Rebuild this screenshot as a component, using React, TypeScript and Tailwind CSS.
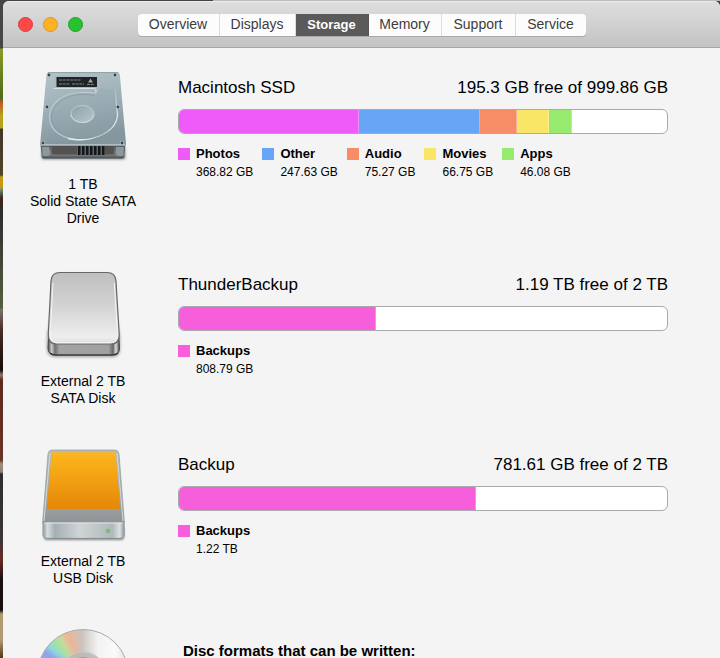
import { useState } from 'react';
import type { ReactNode } from 'react';
import clsx from 'clsx';

interface Segment {
  label: string;
  value: string;
  size: number;
  color: string;
}

interface Volume {
  name: string;
  free: string;
  capacity: number;
  caption: string[];
  icon: ReactNode;
  segments: Segment[];
}

const tabs = [
  { label: 'Overview', width: 'w-[82px]' },
  { label: 'Displays', width: 'w-[76px]' },
  { label: 'Storage', width: 'w-[73px]' },
  { label: 'Memory', width: 'w-[73px]' },
  { label: 'Support', width: 'w-[74px]' },
  { label: 'Service', width: 'w-[70px]' },
];

const lights = [
  { label: 'Close', color: 'bg-[#fc4848] border-[#e03c3c]' },
  { label: 'Minimize', color: 'bg-[#fdb226] border-[#de991c]' },
  { label: 'Zoom', color: 'bg-[#28c231] border-[#1ca526]' },
];

function InternalDriveIcon() {
  const screws = [
    [21, 7],
    [87, 7],
    [19, 39],
    [90, 39],
    [15, 75],
    [94, 75],
  ];
  return (
    <svg viewBox="0 0 110 108" className="h-[108px] w-[110px]" aria-hidden="true">
      <defs>
        <linearGradient id="hd-lid" x1="0" y1="0" x2="0.25" y2="1">
          <stop offset="0" stopColor="#b3c4ca" />
          <stop offset="0.5" stopColor="#9fb1b8" />
          <stop offset="1" stopColor="#84969e" />
        </linearGradient>
        <linearGradient id="hd-front" x1="0" y1="0" x2="0" y2="1">
          <stop offset="0" stopColor="#50575c" />
          <stop offset="0.75" stopColor="#747c80" />
          <stop offset="1" stopColor="#454c50" />
        </linearGradient>
        <linearGradient id="hd-hub" x1="0" y1="0" x2="1" y2="1">
          <stop offset="0" stopColor="#8d9fa6" />
          <stop offset="1" stopColor="#b9c8cd" />
        </linearGradient>
        <linearGradient id="hd-rim" x1="0" y1="0" x2="0" y2="1">
          <stop offset="0" stopColor="#c5d3d8" stopOpacity="0.2" />
          <stop offset="0.5" stopColor="#d3dfe3" />
          <stop offset="1" stopColor="#e1eaed" />
        </linearGradient>
        <filter id="hd-shadow" x="-10%" y="-10%" width="120%" height="130%">
          <feGaussianBlur stdDeviation="1.6" />
        </filter>
      </defs>
      <path d="M14 80H97V91H14Z" fill="#000" opacity="0.55" filter="url(#hd-shadow)" />
      <path d="M12.500 76H97.500L96.500 88Q96.300 90.500 94 90.500H16Q13.700 90.500 13.500 88Z" fill="url(#hd-front)" />
      <path d="M24 78H86V86.500H24Z" fill="#55514f" />
      <path d="M14 79H21Q23 84 21 88H15Z M88 79H96L95 88H89Q87 84 88 79Z" fill="#8d979c" />
      <path d="M49 78H77V87H49Z" fill="#5e6467" />
      {[50, 54, 58, 62, 66, 70, 74].map((x) => (
        <rect key={x} x={x} y="78" width="2.500" height="9" fill="#15181a" />
      ))}
      <path
        d="M21 4H89Q91.500 4 91.800 6.500L98 75.500Q98 77.500 96 77.500H14Q12 77.500 12.200 75.500L18.500 6.500Q18.800 4 21 4Z"
        fill="url(#hd-lid)"
      />
      <path d="M20 4.600H90" stroke="#8fa1a8" strokeWidth="1" />
      <path d="M13 76.800H97" stroke="#bccbd0" strokeWidth="1.200" />
      <path d="M26 7.500H71V20.500H26Z" fill="#a9bbc1" />
      <path d="M25.500 20.500H66Q68.500 20.500 68 25" stroke="#d4e0e3" strokeWidth="1.200" fill="none" />
      {/* Platter recess */}
      <path
        d="M68 25Q60 24 52 24.500C34 25.500 21.500 36 21.500 49C21.500 63 35 72 55 72C76 72 90 61 89.500 46L87 22L72 20Z"
        fill="#8fa3ab"
        fillOpacity="0.25"
      />
      <path d="M68 25Q60 24 52 24.500C34 25.500 21.500 36 21.500 49C21.500 63 35 72 55 72" stroke="#bccbd1" strokeWidth="1.200" fill="none" />
      <path d="M40 70.500C60 75 88 66 89.500 47L87 20" stroke="url(#hd-rim)" strokeWidth="1.400" fill="none" />
      <path d="M66 27.500Q59 26 52 26.500C36 28 23.500 37 23.500 49C23.500 60 35 69.500 54 70" stroke="#899da5" strokeWidth="0.800" fill="none" />
      <path d="M58 70C76 69 87 60 87.500 47" stroke="#82969e" strokeWidth="0.800" fill="none" />
      <ellipse cx="54.500" cy="46" rx="11.500" ry="8.500" fill="url(#hd-hub)" stroke="#c6d3d8" strokeWidth="0.800" />
      <path d="M43 47Q45 54.500 54.500 54.500T66 47" stroke="#cfdbdf" strokeWidth="0.900" fill="none" />
      <rect x="28.500" y="9" width="40.500" height="10" fill="#202426" />
      <path d="M31 12H53M31 16H42M44 16H56M59 16.500H66" stroke="#7e878b" strokeWidth="1" strokeDasharray="3 0.700" />
      <path d="M62.500 10.500L65 14.500H60Z" fill="#9da4a7" />
      {screws.map(([x, y]) => (
        <g key={`${x}-${y}`}>
          <circle cx={x} cy={y} r="2.200" fill="#b7c6cc" />
          <circle cx={x} cy={y} r="1.400" fill="#33424a" />
        </g>
      ))}
    </svg>
  );
}

function SataDiskIcon() {
  return (
    <svg viewBox="0 0 110 108" className="h-[108px] w-[110px]" aria-hidden="true">
      <defs>
        <linearGradient id="sata-top" x1="0" y1="0" x2="0" y2="1">
          <stop offset="0" stopColor="#bfbfbf" />
          <stop offset="0.45" stopColor="#d2d2d2" />
          <stop offset="0.9" stopColor="#eeeeee" />
          <stop offset="1" stopColor="#dddddd" />
        </linearGradient>
        <linearGradient id="sata-side" x1="0" y1="0" x2="1" y2="0">
          <stop offset="0" stopColor="#4b4b4b" />
          <stop offset="0.05" stopColor="#c9c9c9" />
          <stop offset="0.1" stopColor="#707070" />
          <stop offset="0.16" stopColor="#a3a3a3" />
          <stop offset="0.85" stopColor="#a0a0a0" />
          <stop offset="0.91" stopColor="#666666" />
          <stop offset="0.95" stopColor="#dddddd" />
          <stop offset="1" stopColor="#444444" />
        </linearGradient>
        <filter id="sata-shadow" x="-10%" y="-10%" width="120%" height="120%">
          <feGaussianBlur stdDeviation="1.400" />
        </filter>
      </defs>
      <path d="M30 9H81L92 72V84Q92 92 84 92H28Q19 92 19 84V72Z" fill="#000" opacity="0.35" filter="url(#sata-shadow)" />
      <path
        d="M21 66L90.500 66L91.500 83Q91.500 90 84 90H28Q20 90 20 83Z"
        fill="url(#sata-side)"
        stroke="#4a4a4a"
        strokeWidth="1"
      />
      <path d="M22 88Q24 90 28 90H84Q88 90 90 88" stroke="#333333" strokeWidth="1.200" fill="none" />
      <path
        d="M32 7.500H79Q87.500 7.500 88 16L91.200 69Q91.500 79 83 79H28.500Q20 79 20.300 69L23 16Q23.500 7.500 32 7.500Z"
        fill="url(#sata-top)"
        stroke="#686868"
        strokeWidth="1.200"
      />
      <path d="M25 18L22.300 68Q22 77.700 29 77.700H82.500Q90 77.700 89.500 68L86.300 18" stroke="#f4f4f4" strokeWidth="1" fill="none" />
    </svg>
  );
}

function UsbDiskIcon() {
  return (
    <svg viewBox="0 0 110 108" className="h-[108px] w-[110px]" aria-hidden="true">
      <defs>
        <linearGradient id="usb-top" x1="0" y1="0" x2="0" y2="1">
          <stop offset="0" stopColor="#b5bcb9" />
          <stop offset="0.7" stopColor="#a0a4a5" />
          <stop offset="1" stopColor="#8d9294" />
        </linearGradient>
        <linearGradient id="usb-label" x1="0" y1="0" x2="0" y2="1">
          <stop offset="0" stopColor="#feb71d" />
          <stop offset="1" stopColor="#e48708" />
        </linearGradient>
        <linearGradient id="usb-front" x1="0" y1="0" x2="1" y2="0">
          <stop offset="0" stopColor="#8a9498" />
          <stop offset="0.06" stopColor="#d7dddf" />
          <stop offset="0.15" stopColor="#a5afb3" />
          <stop offset="0.45" stopColor="#cfd5d7" />
          <stop offset="0.85" stopColor="#b0b9bc" />
          <stop offset="0.94" stopColor="#dce1e2" />
          <stop offset="1" stopColor="#858e92" />
        </linearGradient>
        <filter id="usb-shadow" x="-10%" y="-20%" width="120%" height="150%">
          <feGaussianBlur stdDeviation="1.300" />
        </filter>
      </defs>
      <rect x="16" y="82" width="80" height="13" rx="3" fill="#000" opacity="0.45" filter="url(#usb-shadow)" />
      <path
        d="M24 5H87Q90.500 5 91 9L96.500 79H14.500L20 9Q20.500 5 24 5Z"
        fill="url(#usb-top)"
        stroke="#99a3a4"
        strokeWidth="0.800"
      />
      <path d="M22 8L16 76M89 8L95 76" stroke="#d0dad8" strokeWidth="1" />
      <path d="M23.700 7.200H87.500L92.300 64H18.700Z" fill="url(#usb-label)" />
      <path
        d="M17.500 77.500H93.500Q96.700 77.500 96.700 80.500V89.500Q96.700 93.500 93 93.500H18Q14.500 93.500 14.500 89.500V80.500Q14.500 77.500 17.500 77.500Z"
        fill="url(#usb-front)"
      />
      <path d="M16 78H95" stroke="#dfe5e6" strokeWidth="1" />
      <path d="M16 92.500Q17 93.400 19 93.400H92Q94 93.400 95.500 92.500" stroke="#7d878b" strokeWidth="0.800" fill="none" />
      <circle cx="80" cy="86" r="2.300" fill="#94a398" />
      <circle cx="80" cy="86" r="1.500" fill="#57d84a" />
    </svg>
  );
}

function DiscIcon() {
  return (
    <svg viewBox="0 0 110 108" className="h-[108px] w-[110px]" aria-hidden="true">
      <defs>
        <linearGradient id="disc-base" x1="0" y1="0" x2="1" y2="0">
          <stop offset="0" stopColor="#b0b0b3" />
          <stop offset="0.48" stopColor="#c8c2be" />
          <stop offset="0.66" stopColor="#f2f2f2" />
          <stop offset="0.85" stopColor="#fafafa" />
          <stop offset="1" stopColor="#e0e0e0" />
        </linearGradient>
        <clipPath id="disc-clip">
          <circle cx="55" cy="50" r="45" />
        </clipPath>
        <filter id="disc-blend" x="-20%" y="-20%" width="140%" height="140%">
          <feGaussianBlur stdDeviation="2.500" />
        </filter>
      </defs>
      <circle cx="55" cy="50" r="45.500" fill="url(#disc-base)" stroke="#aaaaaa" strokeWidth="1" />
      <g clipPath="url(#disc-clip)">
        <g filter="url(#disc-blend)">
          <path d="M55 50L-4 38L-4 24Z" fill="#a99be6" />
          <path d="M55 50L-4 24L-2 8Z" fill="#8aa6ee" />
          <path d="M55 50L-2 8L4 -1Z" fill="#8fdcdc" />
          <path d="M55 50L4 -1L16 -4Z" fill="#9be59a" />
          <path d="M55 50L16 -4L27 -4Z" fill="#c9dba0" />
          <path d="M55 50L27 -4L42 -4Z" fill="#ecb596" />
          <path d="M55 50L42 -4L52 -4Z" fill="#d5bfb2" />
        </g>
      </g>
      <circle cx="55" cy="50" r="23" fill="#b9b9b9" fillOpacity="0.85" stroke="#c9c9c9" strokeWidth="1" />
      <circle cx="55" cy="50" r="18" fill="#9f9f9f" />
      <circle cx="55" cy="50" r="8" fill="#f4f4f4" stroke="#aaaaaa" />
    </svg>
  );
}

const volumes: Volume[] = [
  {
    name: 'Macintosh SSD',
    free: '195.3 GB free of 999.86 GB',
    capacity: 999.86,
    caption: ['1 TB', 'Solid State SATA', 'Drive'],
    icon: <InternalDriveIcon />,
    segments: [
      { label: 'Photos', value: '368.82 GB', size: 368.82, color: 'bg-[#ee5bf8]' },
      { label: 'Other', value: '247.63 GB', size: 247.63, color: 'bg-[#67a6f7]' },
      { label: 'Audio', value: '75.27 GB', size: 75.27, color: 'bg-[#f78d67]' },
      { label: 'Movies', value: '66.75 GB', size: 66.75, color: 'bg-[#f9e667]' },
      { label: 'Apps', value: '46.08 GB', size: 46.08, color: 'bg-[#98ea6e]' },
    ],
  },
  {
    name: 'ThunderBackup',
    free: '1.19 TB free of 2 TB',
    capacity: 2000,
    caption: ['External 2 TB', 'SATA Disk'],
    icon: <SataDiskIcon />,
    segments: [{ label: 'Backups', value: '808.79 GB', size: 808.79, color: 'bg-[#f75edb]' }],
  },
  {
    name: 'Backup',
    free: '781.61 GB free of 2 TB',
    capacity: 2000,
    caption: ['External 2 TB', 'USB Disk'],
    icon: <UsbDiskIcon />,
    segments: [{ label: 'Backups', value: '1.22 TB', size: 1218.39, color: 'bg-[#f75edb]' }],
  },
];

function VolumeRow({ volume }: { volume: Volume }) {
  return (
    <section className="flex">
      <div className="flex w-[160px] shrink-0 flex-col items-center">
        {volume.icon}
        <p className="text-center text-[14px] leading-[17px]">
          {volume.caption.map((line) => (
            <span key={line} className="block">
              {line}
            </span>
          ))}
        </p>
      </div>

      <div className="ml-[15px] min-w-0 flex-1 pt-2">
        <div className="flex justify-between text-[17px] leading-6">
          <h2>{volume.name}</h2>
          <p>{volume.free}</p>
        </div>

        {/* Usage bar */}
        <div className="mt-[9px] flex h-[25px] overflow-hidden rounded-md border border-[#aaaaae] bg-white">
          {volume.segments.map((segment) => (
            <div
              key={segment.label}
              className={clsx('border-r border-white/30', segment.color)}
              style={{ width: `${(segment.size / volume.capacity) * 100}%` }}
            />
          ))}
        </div>

        {/* Legend */}
        <ul className="mt-[10px] flex gap-[9px]">
          {volume.segments.map((segment) => (
            <li key={segment.label} className="flex gap-[6px]">
              <span className={clsx('mt-1 h-3 w-3 shrink-0', segment.color)} />
              <div>
                <p className="text-[13px] font-bold leading-5">{segment.label}</p>
                <p className="text-[12px] leading-4 whitespace-nowrap">{segment.value}</p>
              </div>
            </li>
          ))}
        </ul>
      </div>
    </section>
  );
}

export default function App() {
  const [activeTab, setActiveTab] = useState('Storage');

  return (
    <div className="flex h-screen flex-col overflow-hidden bg-[linear-gradient(to_bottom,#474547_48px,#8a9c20_49px,#4c6b1c_98px,#c4552c_103px,#b5a31e_116px,#b5a31e_128px,#40362a_129px,#54442a_175px,#c49c14_177px,#c49c14_187px,#6d8672_190px,#3c261c_198px,#2d2d30_214px,#55603e_308px,#77716d_310px,#4a2c22_330px,#140c0a_370px,#8d7c6c_375px,#5c2a1c_380px,#6b3423_460px,#9a8f80_464px,#8e8376_472px,#2f2c2f_474px,#3b3638_540px,#6b2c20_560px,#17100e_580px,#17100e_610px,#b09a70_614px,#b09a70_640px,#54351c_658px)] pl-[3px] font-['Liberation_Sans',Arial,sans-serif] text-black">
      <div className="flex h-px shrink-0">
        <div className="w-[210px] bg-[#474147]" />
        <div className="flex-1 bg-[#bcbabc]" />
      </div>

      <div className="flex min-h-0 flex-1 flex-col overflow-hidden rounded-t-md bg-[#f4f4f4]">
        {/* Title bar */}
        <header className="grid h-[47px] shrink-0 grid-cols-[1fr_auto_1fr] items-center border-t border-b border-t-[#ececec] border-b-[#a6a6a6] bg-linear-to-b from-[#dedede] to-[#c3c3c3]">
          <div className="flex gap-[10px] pl-[15px]">
            {lights.map((light) => (
              <button
                key={light.label}
                type="button"
                aria-label={light.label}
                className={clsx('h-[15px] w-[15px] rounded-full border', light.color)}
              />
            ))}
          </div>

          <nav className="flex h-[22px] overflow-hidden rounded-[4px] bg-[#fcfcfc] shadow-[0_1px_0_#a9a9a9]">
            {tabs.map((tab) => (
              <button
                key={tab.label}
                type="button"
                aria-pressed={activeTab === tab.label}
                onClick={() => setActiveTab(tab.label)}
                className={clsx(
                  'border-r last:border-r-0',
                  tab.width,
                  activeTab === tab.label
                    ? 'border-[#555555] bg-[#5a5a5a] text-[13px] font-bold text-white'
                    : 'border-[#dcdcdc] text-[14px] text-[#3c3c3c]'
                )}
              >
                {tab.label}
              </button>
            ))}
          </nav>
        </header>

        <main className="flex flex-col gap-[38px] pt-5 pr-[52px]">
          {volumes.map((volume) => (
            <VolumeRow key={volume.name} volume={volume} />
          ))}

          <section className="flex">
            <div className="flex w-[160px] shrink-0 justify-center">
              <DiscIcon />
            </div>
            <h2 className="ml-5 pt-4 text-[15px] font-bold leading-5">Disc formats that can be written:</h2>
          </section>
        </main>
      </div>
    </div>
  );
}
